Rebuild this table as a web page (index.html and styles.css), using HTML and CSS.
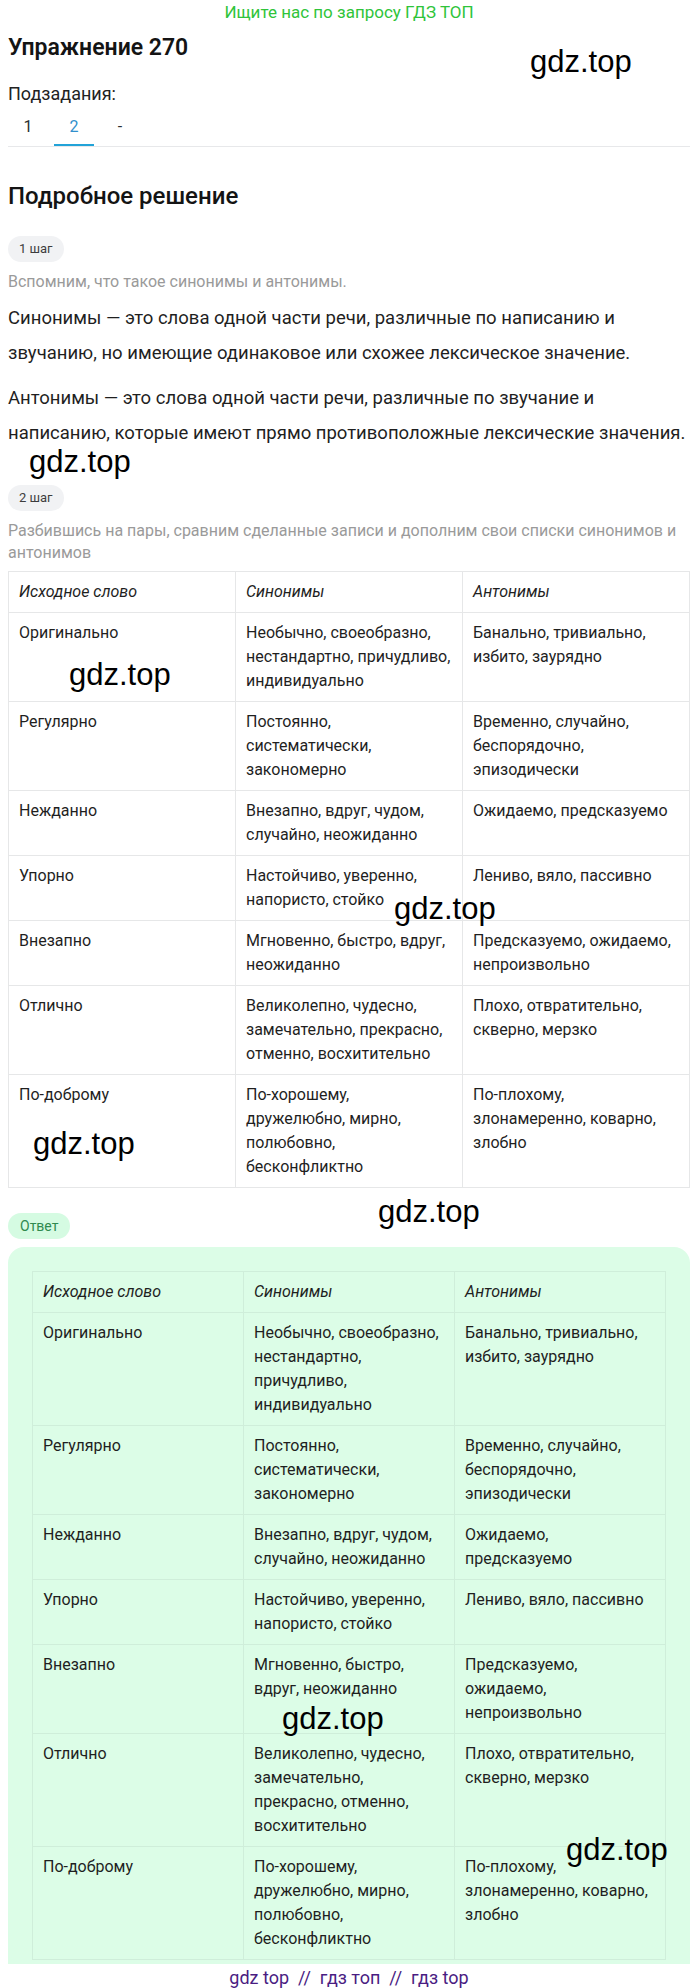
FILE: index.html
```html
<!DOCTYPE html>
<html lang="ru">
<head>
<meta charset="utf-8">
<title>Упражнение 270</title>
<link rel="stylesheet" href="styles.css">
</head>
<body>
<div class="page">
  <div class="banner">Ищите нас по запросу ГДЗ ТОП</div>
  <h1 class="title">Упражнение 270</h1>
  <div class="subtasks-label">Подзадания:</div>
  <nav class="tabs">
    <span class="tab">1</span>
    <span class="tab active">2</span>
    <span class="tab">-</span>
  </nav>

  <h2 class="section-title">Подробное решение</h2>

  <div class="badge">1 шаг</div>
  <p class="hint">Вспомним, что такое синонимы и антонимы.</p>
  <p class="text">Синонимы — это слова одной части речи, различные по написанию и звучанию, но имеющие одинаковое или схожее лексическое значение.</p>
  <p class="text text-next">Антонимы — это слова одной части речи, различные по звучание и написанию, которые имеют прямо противоположные лексические значения.</p>

  <div class="badge badge-step2">2 шаг</div>
  <p class="hint">Разбившись на пары, сравним сделанные записи и дополним свои списки синонимов и антонимов</p>

  <table class="words">
    <thead>
      <tr><th>Исходное слово</th><th>Синонимы</th><th>Антонимы</th></tr>
    </thead>
    <tbody>
      <tr><td>Оригинально</td><td>Необычно, своеобразно, нестандартно, причудливо, индивидуально</td><td>Банально, тривиально, избито, заурядно</td></tr>
      <tr><td>Регулярно</td><td>Постоянно, систематически, закономерно</td><td>Временно, случайно, беспорядочно, эпизодически</td></tr>
      <tr><td>Нежданно</td><td>Внезапно, вдруг, чудом, случайно, неожиданно</td><td>Ожидаемо, предсказуемо</td></tr>
      <tr><td>Упорно</td><td>Настойчиво, уверенно, напористо, стойко</td><td>Лениво, вяло, пассивно</td></tr>
      <tr><td>Внезапно</td><td>Мгновенно, быстро, вдруг, неожиданно</td><td>Предсказуемо, ожидаемо, непроизвольно</td></tr>
      <tr><td>Отлично</td><td>Великолепно, чудесно, замечательно, прекрасно, отменно, восхитительно</td><td>Плохо, отвратительно, скверно, мерзко</td></tr>
      <tr><td>По-доброму</td><td>По-хорошему, дружелюбно, мирно, полюбовно, бесконфликтно</td><td>По-плохому, злонамеренно, коварно, злобно</td></tr>
    </tbody>
  </table>

  <div class="badge badge-answer">Ответ</div>
  <div class="answer">
    <table class="words words-answer">
      <thead>
        <tr><th>Исходное слово</th><th>Синонимы</th><th>Антонимы</th></tr>
      </thead>
      <tbody>
        <tr><td>Оригинально</td><td>Необычно, своеобразно, нестандартно, причудливо, индивидуально</td><td>Банально, тривиально, избито, заурядно</td></tr>
        <tr><td>Регулярно</td><td>Постоянно, систематически, закономерно</td><td>Временно, случайно, беспорядочно, эпизодически</td></tr>
        <tr><td>Нежданно</td><td>Внезапно, вдруг, чудом, случайно, неожиданно</td><td>Ожидаемо, предсказуемо</td></tr>
        <tr><td>Упорно</td><td>Настойчиво, уверенно, напористо, стойко</td><td>Лениво, вяло, пассивно</td></tr>
        <tr><td>Внезапно</td><td>Мгновенно, быстро, вдруг, неожиданно</td><td>Предсказуемо, ожидаемо, непроизвольно</td></tr>
        <tr><td>Отлично</td><td>Великолепно, чудесно, замечательно, прекрасно, отменно, восхитительно</td><td>Плохо, отвратительно, скверно, мерзко</td></tr>
        <tr><td>По-доброму</td><td>По-хорошему, дружелюбно, мирно, полюбовно, бесконфликтно</td><td>По-плохому, злонамеренно, коварно, злобно</td></tr>
      </tbody>
    </table>
  </div>

  <div class="footer">gdz top &nbsp;//&nbsp; гдз топ &nbsp;//&nbsp; гдз top</div>

  <span class="wm wm1">gdz.top</span>
  <span class="wm wm2">gdz.top</span>
  <span class="wm wm3">gdz.top</span>
  <span class="wm wm4">gdz.top</span>
  <span class="wm wm5">gdz.top</span>
  <span class="wm wm6">gdz.top</span>
  <span class="wm wm7">gdz.top</span>
  <span class="wm wm8">gdz.top</span>
</div>
</body>
</html>
```

FILE: styles.css
```css
* { box-sizing: border-box; }

html, body {
  margin: 0;
  padding: 0;
  background: #ffffff;
}

body {
  font-family: Roboto, "Noto Sans", "Liberation Sans", sans-serif;
  color: #1c1c1c;
}

.page {
  position: relative;
  padding: 0 10px 0 8px;
  height: 1988px;
  overflow: hidden;
}

.banner {
  height: 24px;
  font-size: 17px;
  line-height: 24px;
  text-align: center;
  color: #2fc43a;
}

.title {
  margin: 8px 0 0;
  font-size: 23px;
  line-height: 32px;
  font-weight: 600;
  color: #141414;
}

.subtasks-label {
  margin-top: 18px;
  font-size: 18px;
  line-height: 24px;
  color: #222;
}

.tabs {
  display: flex;
  gap: 6px;
  border-bottom: 1px solid #e7e8ea;
}

.tab {
  width: 40px;
  height: 40px;
  display: flex;
  align-items: center;
  justify-content: center;
  font-size: 16px;
  color: #2b2f33;
  border-bottom: 2px solid transparent;
  padding-top: 2px;
}

.tab.active {
  color: #3190cc;
  border-bottom-color: #22a3d8;
}

.section-title {
  margin: 34px 0 0;
  font-size: 24px;
  line-height: 30px;
  font-weight: 500;
  color: #141414;
}

.badge {
  width: fit-content;
  margin-top: 25px;
  height: 26px;
  padding: 0 11px;
  border-radius: 13px;
  background: #f1f2f4;
  font-size: 13px;
  line-height: 26px;
  color: #3d3d3d;
}

.badge-step2 {
  margin-top: 34px;
}

.badge-answer {
  margin-top: 25px;
  padding: 0 12px;
  background: #d5fbe2;
  color: #2f8a4f;
  font-size: 14px;
}

.hint {
  margin: 9px 0 0;
  font-size: 16px;
  line-height: 22px;
  color: #9a9a9a;
}

.text {
  margin: 8px 0 0;
  font-size: 18.5px;
  line-height: 35px;
  color: #1f1f1f;
}

.text-next {
  margin-top: 10px;
}

.words {
  width: 100%;
  margin-top: 7px;
  border-collapse: collapse;
  table-layout: fixed;
  font-size: 16px;
  line-height: 24px;
  color: #1f1f1f;
}

.words th,
.words td {
  border: 1px solid #e6e7e8;
  padding: 8px 10px;
  text-align: left;
  vertical-align: top;
}

.words th {
  font-style: italic;
  font-weight: 400;
}

.answer {
  margin-top: 8px;
  padding: 24px 24px 4px;
  background: #dcfde7;
  border-radius: 16px 16px 0 0;
}

.words-answer {
  margin-top: 0;
}

.words-answer th,
.words-answer td {
  border-color: #cfeeda;
}

.footer {
  height: 27px;
  font-size: 18px;
  line-height: 27px;
  text-align: center;
  color: #4a1d82;
}

.wm {
  position: absolute;
  font-family: "Liberation Sans", Arial, sans-serif;
  font-size: 31px;
  line-height: 1;
  color: #000;
  white-space: nowrap;
}

.wm1 { left: 530px; top: 46px; }
.wm2 { left: 29px; top: 446px; }
.wm3 { left: 69px; top: 659px; }
.wm4 { left: 394px; top: 893px; }
.wm5 { left: 33px; top: 1128px; }
.wm6 { left: 378px; top: 1196px; }
.wm7 { left: 282px; top: 1703px; }
.wm8 { left: 566px; top: 1834px; }
```
